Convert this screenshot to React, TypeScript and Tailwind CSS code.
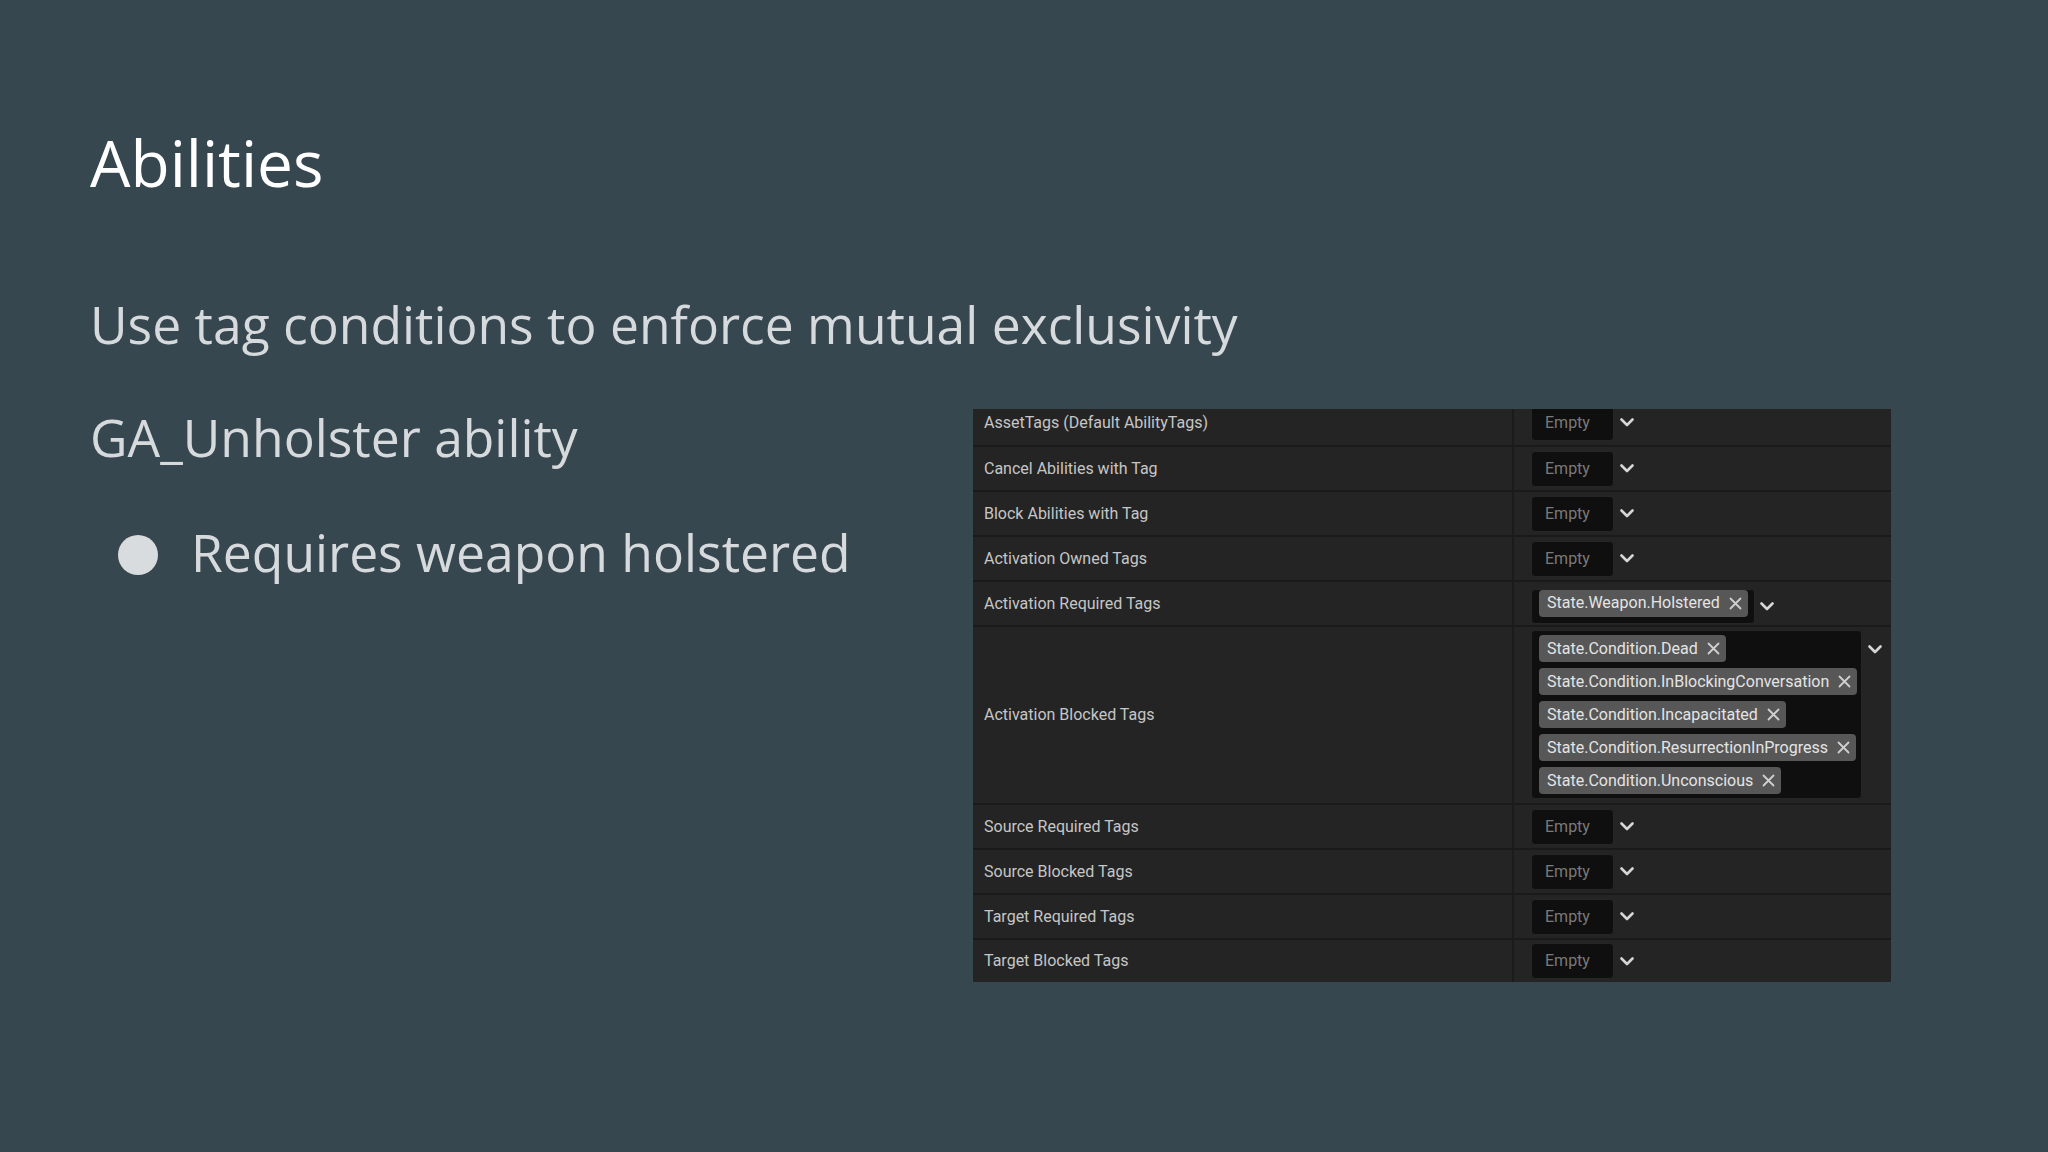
const emptyRows = {
  top: ["AssetTags (Default AbilityTags)", "Cancel Abilities with Tag", "Block Abilities with Tag", "Activation Owned Tags"],
  bottom: ["Source Required Tags", "Source Blocked Tags", "Target Required Tags", "Target Blocked Tags"],
};

const blockedTags = [
  "State.Condition.Dead",
  "State.Condition.InBlockingConversation",
  "State.Condition.Incapacitated",
  "State.Condition.ResurrectionInProgress",
  "State.Condition.Unconscious",
];

function Chevron() {
  return (
    <svg width="14" height="9" viewBox="0 0 14 9" className="shrink-0">
      <polyline points="1.5,1.5 7,7 12.5,1.5" fill="none" stroke="#d6d6d6" strokeWidth="2.6" strokeLinecap="round" strokeLinejoin="round" />
    </svg>
  );
}

function Cross() {
  return (
    <svg width="13" height="13" viewBox="0 0 13 13" className="shrink-0">
      <path d="M1.5 1.5 L11.5 11.5 M11.5 1.5 L1.5 11.5" stroke="#cfcfcf" strokeWidth="1.8" strokeLinecap="round" />
    </svg>
  );
}

function Chip({ label }: { label: string }) {
  return (
    <div className="flex h-[27px] items-center gap-[9px] self-start rounded-[4px] bg-[#575757] pl-[8px] pr-[6px]">
      <span className="text-[16px] leading-none text-[#e4e4e4]">{label}</span>
      <Cross />
    </div>
  );
}

function EmptyBox() {
  return (
    <div className="flex items-center gap-[6px]">
      <div className="flex h-[36px] w-[83px] items-center rounded-[4px] border border-[#262626] bg-[#0f0f0f] pl-[13px] text-[16px] text-[#7a7a7a]">
        Empty
      </div>
      <Chevron />
    </div>
  );
}

function Row({ label, first, className, children }: { label: string; first?: boolean; className?: string; children: React.ReactNode }) {
  return (
    <div className={`flex ${first ? "" : "border-t-2 border-[#1a1a1a]"} ${className ?? "h-[45px]"}`}>
      <div className="flex w-[541px] shrink-0 items-center border-r-2 border-[#1b1b1b] pl-[11px] text-[16px] text-[#c6c6c6]">
        {label}
      </div>
      <div className="flex flex-1 items-center pl-[17px]">{children}</div>
    </div>
  );
}

export default function App() {
  return (
    <div className="h-[1152px] w-[2048px] overflow-hidden bg-[#37474f] pl-[90px] pt-[131px] font-['Open_Sans',sans-serif]">
      <h1 className="h-[64px] text-[64px] leading-[64px] text-white">Abilities</h1>
      <p className="mt-[103px] h-[52px] text-[51.6px] leading-[52px] text-[#d6dadd]">Use tag conditions to enforce mutual exclusivity</p>

      <div className="mt-[59px] flex">
        <div className="w-[883px] shrink-0 pt-[2px] text-[51.6px] leading-[52px] text-[#d6dadd]">
          <p className="h-[52px]">GA_Unholster ability</p>
          <div className="mt-[63px] flex h-[52px] items-center">
            <span className="ml-[28px] mt-[6px] h-[40px] w-[40px] rounded-full bg-[#d9dcde]" />
            <span className="ml-[33px]">Requires weapon holstered</span>
          </div>
        </div>

        <div className="w-[918px] shrink-0 bg-[#242424] font-['Roboto',sans-serif]">
          <div className="flex h-[36px] flex-col justify-end overflow-hidden">
            <Row label={emptyRows.top[0]} first className="h-[45px] shrink-0">
              <EmptyBox />
            </Row>
          </div>
          {emptyRows.top.slice(1).map((label) => (
            <Row key={label} label={label}>
              <EmptyBox />
            </Row>
          ))}
          <Row label="Activation Required Tags">
            <div className="flex items-center gap-[5px] pt-[5px]">
              <div className="flex h-[35px] items-center rounded-[4px] border border-[#262626] bg-[#0f0f0f] pl-[7px] pr-[6px]">
                <Chip label="State.Weapon.Holstered" />
              </div>
              <Chevron />
            </div>
          </Row>
          <Row label="Activation Blocked Tags" className="h-[178px]">
            <div className="flex h-full items-start gap-[6px] pt-[3px]">
              <div className="flex w-[331px] flex-col gap-[6px] rounded-[4px] border border-[#262626] bg-[#0f0f0f] py-[4px] pl-[7px]">
                {blockedTags.map((t) => (
                  <Chip key={t} label={t} />
                ))}
              </div>
              <div className="pt-[15px]">
                <Chevron />
              </div>
            </div>
          </Row>
          {emptyRows.bottom.map((label, i) => (
            <Row key={label} label={label} className={i === 3 ? "h-[44px]" : "h-[45px]"}>
              <EmptyBox />
            </Row>
          ))}
        </div>
      </div>
    </div>
  );
}
